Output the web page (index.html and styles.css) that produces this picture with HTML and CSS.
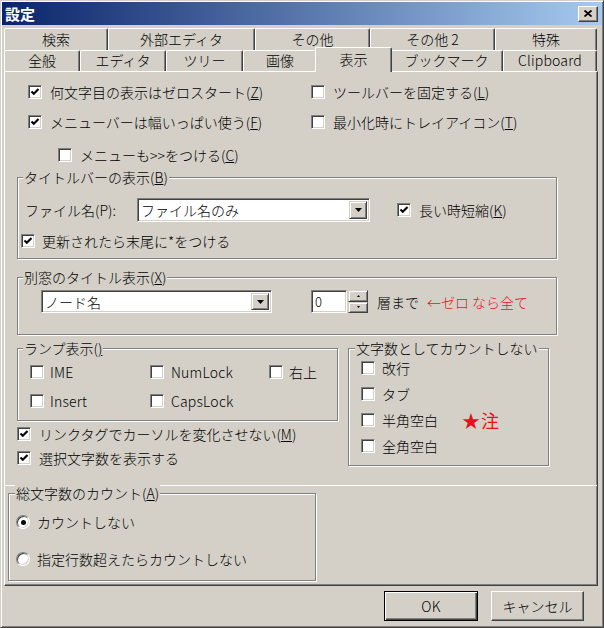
FILE: index.html
```html
<!DOCTYPE html>
<html lang="ja">
<head>
<meta charset="utf-8">
<title>設定</title>
<link rel="stylesheet" href="styles.css">
</head>
<body>
<div class="window">
  <div class="titlebar">
    <span class="title">設定</span>
    <span class="close"><svg width="8" height="7" viewBox="0 0 8 7"><path d="M0.5 0.5 L7.5 6.5 M7.5 0.5 L0.5 6.5" stroke="#000" stroke-width="1.8" fill="none"/></svg></span>
  </div>
  <div class="content">
    <div class="tabs">
      <div class="tabrow back">
        <div class="tab w104">検索</div>
        <div class="tab w147">外部エディタ</div>
        <div class="tab w115">その他</div>
        <div class="tab w125">その他 2</div>
        <div class="tab w102">特殊</div>
      </div>
      <div class="tabrow front">
        <div class="tab w76">全般</div>
        <div class="tab w86">エディタ</div>
        <div class="tab w77">ツリー</div>
        <div class="tab w74">画像</div>
        <div class="tab sel">表示</div>
        <div class="tab w113">ブックマーク</div>
        <div class="tab w94 latin">Clipboard</div>
      </div>
    </div>
    <div class="page">
      <div class="page-main">
        <div class="toprows">
          <label class="chk g8"><span class="box"><svg viewBox="0 0 12 12"><polyline points="2.5,5.5 4.8,7.8 9.5,3" /></svg></span><span>何文字目の表示はゼロスタート(<u>Z</u>)</span></label>
          <label class="chk g8"><span class="box"></span><span>ツールバーを固定する(<u>L</u>)</span></label>
          <label class="chk g8"><span class="box"><svg viewBox="0 0 12 12"><polyline points="2.5,5.5 4.8,7.8 9.5,3" /></svg></span><span>メニューバーは幅いっぱい使う(<u>F</u>)</span></label>
          <label class="chk g8"><span class="box"></span><span>最小化時にトレイアイコン(<u>T</u>)</span></label>
        </div>
        <label class="chk g8 indent"><span class="box"></span><span>メニューも&gt;&gt;をつける(<u>C</u>)</span></label>

        <div class="group g-title">
          <div class="gtitle">タイトルバーの表示(<u>B</u>)</div>
          <div class="filerow">
            <span class="flabel">ファイル名(P):</span>
            <div class="combo c1"><span class="val">ファイル名のみ</span><span class="dbtn"><svg width="7" height="4" viewBox="0 0 7 4"><path d="M0 0 H7 L3.5 4 Z" fill="#000"/></svg></span></div>
            <label class="chk g8 nagai"><span class="box"><svg viewBox="0 0 12 12"><polyline points="2.5,5.5 4.8,7.8 9.5,3" /></svg></span><span>長い時短縮(<u>K</u>)</span></label>
          </div>
          <label class="chk g7 koushin"><span class="box"><svg viewBox="0 0 12 12"><polyline points="2.5,5.5 4.8,7.8 9.5,3" /></svg></span><span>更新されたら末尾に*をつける</span></label>
        </div>

        <div class="group g-betsu">
          <div class="gtitle">別窓のタイトル表示(<u>X</u>)</div>
          <div class="betsurow">
            <div class="combo c2"><span class="val">ノード名</span><span class="dbtn"><svg width="7" height="4" viewBox="0 0 7 4"><path d="M0 0 H7 L3.5 4 Z" fill="#000"/></svg></span></div>
            <div class="spinedit">0</div>
            <div class="spinbtns">
              <span class="sb"><svg width="3" height="2" viewBox="0 0 3 2"><path d="M1.5 0 L3 2 H0 Z" fill="#000"/></svg></span>
              <span class="sb"><svg width="3" height="2" viewBox="0 0 3 2"><path d="M0 0 H3 L1.5 2 Z" fill="#000"/></svg></span>
            </div>
            <span class="souMade">層まで</span>
            <span class="red note1">←ゼロ なら全て</span>
          </div>
        </div>

        <div class="lower">
          <div class="leftcol">
            <div class="group g-lamp">
              <div class="gtitle">ランプ表示(<u>)</u></div>
              <div class="lampgrid">
                <label class="chk g6"><span class="box"></span><span class="latin">IME</span></label>
                <label class="chk g7"><span class="box"></span><span class="latin">NumLock</span></label>
                <label class="chk g6"><span class="box"></span><span>右上</span></label>
                <label class="chk g6"><span class="box"></span><span class="latin">Insert</span></label>
                <label class="chk g7"><span class="box"></span><span class="latin">CapsLock</span></label>
              </div>
            </div>
            <label class="chk g8 row24"><span class="box"><svg viewBox="0 0 12 12"><polyline points="2.5,5.5 4.8,7.8 9.5,3" /></svg></span><span>リンクタグでカーソルを変化させない(<u>M</u>)</span></label>
            <label class="chk g8 row24"><span class="box"><svg viewBox="0 0 12 12"><polyline points="2.5,5.5 4.8,7.8 9.5,3" /></svg></span><span>選択文字数を表示する</span></label>
          </div>
          <div class="group g-count">
            <div class="gtitle">文字数としてカウントしない</div>
            <div class="countlist">
              <label class="chk g7 row26"><span class="box"></span><span>改行</span></label>
              <label class="chk g7 row26"><span class="box"></span><span>タブ</span></label>
              <label class="chk g7 row26"><span class="box"></span><span>半角空白</span><span class="red star">★注</span></label>
              <label class="chk g7 row26"><span class="box"></span><span>全角空白</span></label>
            </div>
          </div>
        </div>
      </div>
      <div class="page-lower">
        <div class="group g-total">
          <div class="gtitle">総文字数のカウント(<u>A</u>)</div>
          <label class="rad r1"><span class="rbox on"></span><span>カウントしない</span></label>
          <label class="rad r2"><span class="rbox"></span><span>指定行数超えたらカウントしない</span></label>
        </div>
      </div>
    </div>
    <div class="buttons">
      <div class="btn default latin">OK</div>
      <div class="btn">キャンセル</div>
    </div>
  </div>
</div>
</body>
</html>
```
FILE: styles.css
```css
* { box-sizing: border-box; }
html, body { margin: 0; padding: 0; }
body {
  background: #d4d0c8;
  font-family: "Noto Sans CJK JP", "Liberation Sans", sans-serif;
  font-size: 14px;
  font-weight: 300;
  line-height: 16px;
  color: #000;
}
u { text-decoration: underline; text-underline-offset: 1px; }
.latin { letter-spacing: 0.2px; }

.window {
  width: 604px;
  height: 628px;
  background: #d4d0c8;
  border: 1px solid;
  border-color: #d4d0c8 #404040 #404040 #d4d0c8;
  box-shadow: inset 1px 1px 0 #fff, inset -1px -1px 0 #808080;
  padding: 1px;
  overflow: hidden;
}

.titlebar {
  height: 23px;
  background: linear-gradient(to right, #0a246a, #a6caf0);
  display: flex;
  align-items: center;
  justify-content: space-between;
  padding: 0 4px 0 3px;
}
.title {
  color: #fff;
  font-weight: bold;
  font-size: 15px;
  line-height: 23px;
}
.close {
  width: 20px;
  height: 16px;
  background: #d4d0c8;
  border: 1px solid;
  border-color: #fff #404040 #404040 #fff;
  box-shadow: inset -1px -1px 0 #808080;
  display: flex;
  align-items: center;
  justify-content: center;
}

.content { padding: 0 0 0 2px; }

.tabs { margin-top: 3px; }
.tabrow { display: flex; }
.tabrow.back { height: 22px; }
.tabrow.front { height: 21px; align-items: flex-end; }
.tab {
  height: 100%;
  display: flex;
  align-items: center;
  justify-content: center;
  border-top: 1px solid #fff;
  border-left: 1px solid #fff;
  border-right: 1px solid #404040;
  box-shadow: inset -1px 0 0 #808080;
  border-radius: 2px 2px 0 0;
  padding-bottom: 1px;
}
.tabrow.back .tab { padding-bottom: 2px; }
.tabrow.front .tab { padding-bottom: 3px; }
.tab.sel {
  width: 77px;
  height: 25px;
  margin: 0 -2px -1px -2px;
  align-self: flex-end;
  position: relative;
  z-index: 1;
  background: #d4d0c8;
  padding-bottom: 5px;
}
.w76 { width: 76px; } .w86 { width: 86px; } .w77 { width: 77px; } .w74 { width: 74px; }
.w113 { width: 113px; } .w94 { width: 94px; }
.w104 { width: 104px; } .w147 { width: 147px; } .w115 { width: 115px; } .w125 { width: 125px; } .w102 { width: 102px; }

.page {
  width: 594px;
  height: 515px;
  border: 1px solid;
  border-color: #fff #404040 #404040 #fff;
  box-shadow: inset -1px -1px 0 #808080;
}
.page-main { height: 413px; padding-top: 5px; }
.page-lower { height: 100px; border-top: 1px solid #fff; }

/* checkboxes */
.chk { display: flex; align-items: center; white-space: nowrap; }
.g6 { gap: 6px; } .g7 { gap: 7px; } .g8 { gap: 8px; }
.box {
  width: 14px;
  height: 14px;
  flex: none;
  background: #fff;
  border: 1px solid;
  border-color: #808080 #fff #fff #808080;
  box-shadow: inset 1px 1px 0 #404040, inset -1px -1px 0 #d4d0c8;
  display: flex;
  align-items: center;
  justify-content: center;
}
.box svg { width: 12px; height: 12px; }
.box polyline { fill: none; stroke: #000; stroke-width: 2.1; }

.toprows {
  display: grid;
  grid-template-columns: 283px auto;
  grid-auto-rows: 30px;
  padding-left: 23px;
}
.indent { height: 30px; margin: 3px 0 0 53px; }

/* group boxes */
.group {
  border: 1px solid #808080;
  box-shadow: 1px 1px 0 #fff, inset 1px 1px 0 #fff;
}
.gtitle {
  width: fit-content;
  margin: -9px 0 0 5px;
  padding: 0 1px;
  background: #d4d0c8;
  line-height: 16px;
  height: 16px;
  white-space: nowrap;
}

.g-title { margin: 7px 0 0 12px; width: 540px; height: 82px; }
.filerow { display: flex; align-items: center; height: 24px; margin-top: 13px; padding-left: 7px; }
.flabel { width: 112px; flex: none; }
.nagai { margin-left: 27px; }
.koushin { height: 20px; margin-top: 9px; padding-left: 3px; }

.combo {
  display: flex;
  background: #fff;
  border: 1px solid;
  border-color: #808080 #fff #fff #808080;
  box-shadow: inset 1px 1px 0 #404040, inset -1px -1px 0 #d4d0c8;
  padding: 2px 2px 2px 2px;
}
.combo .val { flex: 1; padding-left: 1px; white-space: nowrap; display: flex; align-items: center; }
.c1 { width: 233px; height: 24px; }
.c2 { width: 231px; height: 23px; }
.dbtn {
  width: 18px;
  flex: none;
  background: #d4d0c8;
  border: 1px solid;
  border-color: #d4d0c8 #404040 #404040 #d4d0c8;
  box-shadow: inset 1px 1px 0 #fff, inset -1px -1px 0 #808080;
  display: flex;
  align-items: center;
  justify-content: center;
}

.g-betsu { margin: 18px 0 0 12px; width: 540px; height: 58px; }
.betsurow { display: flex; align-items: center; height: 23px; margin-top: 5px; padding-left: 23px; }
.spinedit {
  margin-left: 39px;
  width: 36px;
  height: 23px;
  background: #fff;
  border: 1px solid;
  border-color: #808080 #fff #fff #808080;
  box-shadow: inset 1px 1px 0 #404040, inset -1px -1px 0 #d4d0c8;
  padding-left: 3px;
  font-size: 13px;
  line-height: 21px;
}
.spinbtns { width: 20px; height: 23px; margin-left: 1px; display: flex; flex-direction: column; }
.sb {
  flex: 1;
  background: #d4d0c8;
  border: 1px solid;
  border-color: #d4d0c8 #404040 #404040 #d4d0c8;
  box-shadow: inset 1px 1px 0 #fff, inset -1px -1px 0 #808080;
  display: flex;
  align-items: center;
  justify-content: center;
}
.souMade { margin-left: 9px; }
.red { color: #e8101c; }
.note1 { margin-left: 8px; white-space: nowrap; }

.lower { display: flex; align-items: flex-start; margin-top: 13px; padding-left: 12px; }
.leftcol { width: 331px; flex: none; }
.g-lamp { width: 321px; height: 73px; }
.lampgrid {
  display: grid;
  grid-template-columns: 120px 119px auto;
  grid-auto-rows: 29px;
  margin-top: 1px;
  padding-left: 12px;
}
.row24 { height: 24px; }
.leftcol .g-lamp + .row24 { margin-top: 1px; }

.g-count { width: 201px; height: 118px; }
.g-count .gtitle { margin-left: 6px; }
.countlist { margin-top: -1px; padding-left: 12px; }
.row26 { height: 26px; }
.star { font-size: 18px; margin-left: 17px; letter-spacing: 1px; font-weight: 400; }

.g-total { margin: 7px 0 0 3px; width: 308px; height: 88px; }
.g-total .gtitle { margin-left: 6px; }
.rad { display: flex; align-items: center; gap: 7px; height: 30px; padding-left: 7px; }
.r1 { margin-top: 6px; }
.r2 { margin-top: 7px; }
.rbox {
  width: 14px;
  height: 14px;
  flex: none;
  border-radius: 50%;
  background: #fff;
  border: 1px solid;
  border-color: #808080 #fff #fff #808080;
  box-shadow: inset 1px 1px 0 #404040, inset -1px -1px 0 #d4d0c8;
  display: flex;
  align-items: center;
  justify-content: center;
}
.rbox.on::after {
  content: "";
  width: 5px;
  height: 5px;
  border-radius: 50%;
  background: #000;
}

.buttons {
  display: flex;
  justify-content: flex-end;
  gap: 13px;
  margin-top: 5px;
  padding-right: 18px;
}
.btn {
  width: 93px;
  height: 30px;
  display: flex;
  align-items: center;
  justify-content: center;
  border: 1px solid;
  border-color: #fff #404040 #404040 #fff;
  box-shadow: inset -1px -1px 0 #808080;
}
.btn.default {
  width: 94px;
  border: 1px solid #000;
  box-shadow: inset 1px 1px 0 #fff, inset -1px -1px 0 #404040, inset -2px -2px 0 #808080;
}
```
